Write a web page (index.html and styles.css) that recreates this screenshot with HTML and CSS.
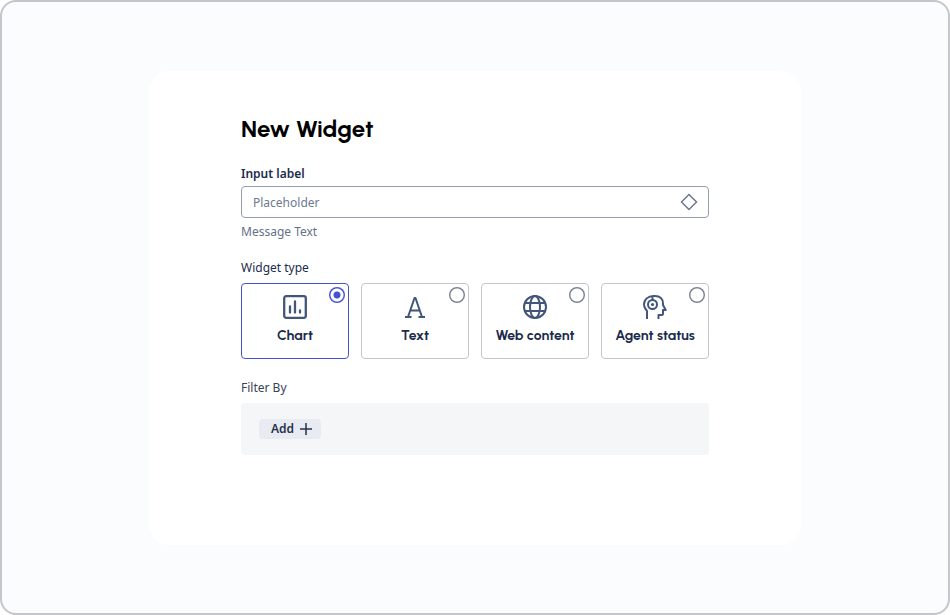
FILE: index.html
```html
<!DOCTYPE html>
<html lang="en">
<head>
<meta charset="utf-8">
<meta name="viewport" content="width=device-width, initial-scale=1">
<title>New Widget</title>
<link rel="stylesheet" href="styles.css">
</head>
<body>
<main class="frame">
  <form class="panel">
    <h1 class="title">New Widget</h1>

    <div class="field">
      <label class="label label-strong" for="widget-input">Input label</label>
      <div class="input-box">
        <input class="input" id="widget-input" type="text" placeholder="Placeholder" aria-describedby="widget-message">
        <svg class="input-icon" viewBox="0 0 18 18" aria-hidden="true"><path d="M9 1.5 16.5 9 9 16.5 1.5 9Z"/></svg>
      </div>
      <p class="message" id="widget-message">Message Text</p>
    </div>

    <fieldset class="group">
      <legend class="label">Widget type</legend>
      <div class="options">
        <label class="option">
          <input class="radio" type="radio" name="type" checked>
          <svg class="icon" viewBox="0 0 24 24" aria-hidden="true"><rect x="1.200" y="1.200" width="21.600" height="21.600" rx="2"/><path d="M7 11.500v6M12 6.500v11M17 15.500v2" stroke-linecap="round"/></svg>
          <span class="option-name">Chart</span>
        </label>
        <label class="option">
          <input class="radio" type="radio" name="type">
          <svg class="icon icon-fine" viewBox="0 0 24 24" aria-hidden="true"><path d="M5 22 11.500 3h1L19 22M7.500 15.500h9M2 22h6.500M15.500 22H22"/></svg>
          <span class="option-name">Text</span>
        </label>
        <label class="option">
          <input class="radio" type="radio" name="type">
          <svg class="icon icon-fine" viewBox="0 0 24 24" aria-hidden="true"><circle cx="12" cy="12" r="11"/><ellipse cx="12" cy="12" rx="5" ry="11"/><path d="M2 8h20M2 16h20"/></svg>
          <span class="option-name">Web content</span>
        </label>
        <label class="option">
          <input class="radio" type="radio" name="type">
          <svg class="icon icon-fine" viewBox="0 0 24 24" aria-hidden="true"><path d="M4 24v-8C2 14 1 12 1 9.500 1 4.500 5 1 10.500 1H12c5 0 8 3 8 7.500v1.500l2.700 5H20v3.500q0 1.500-1.500 1.500H15.500v4M9.500 1v4"/><circle cx="9.500" cy="9.500" r="4.500"/><circle class="dot" cx="9.500" cy="9.500" r="1.600"/></svg>
          <span class="option-name">Agent status</span>
        </label>
      </div>
    </fieldset>

    <section class="group">
      <h2 class="label label-filter">Filter By</h2>
      <div class="filters">
        <button class="add" type="button">Add
          <svg class="plus" viewBox="0 0 12 12" aria-hidden="true"><path d="M6 0v12M0 6h12"/></svg>
        </button>
      </div>
    </section>
  </form>
</main>
</body>
</html>
```

FILE: styles.css
```css
* {
  box-sizing: border-box;
}

body {
  margin: 0;
  background: #fff;
  color: #1c2b4b;
  font: 12px/20px "Noto Sans", sans-serif;
}

.frame {
  display: flex;
  align-items: center;
  justify-content: center;
  min-height: 100vh;
  border: 2px solid #c5c5cc;
  border-radius: 16px;
  background: #fbfcfe;
}

.panel {
  width: 100%;
  max-width: 652px;
  padding: 42px 92px 90px;
  border-radius: 20px;
  background: #fff;
}

.title {
  margin: 0 0 19px;
  color: #000;
  font: 700 24px/32px Urbanist, Lato, sans-serif;
}

.label {
  display: block;
  margin: 0;
  padding: 0;
  font-size: 12px;
  font-weight: 400;
  line-height: 20px;
}

.label-strong {
  font-weight: 600;
}

.label-filter {
  color: #384258;
}

.input-box {
  display: flex;
  align-items: center;
  height: 32px;
  margin-top: 2px;
  padding: 0 10px 0 11px;
  border: 1px solid #979eac;
  border-radius: 4px;
}

.input {
  flex: 1;
  min-width: 0;
  padding: 2px 0 0;
  border: 0;
  outline: 0;
  background: none;
  color: inherit;
  font: inherit;
}

.input::placeholder {
  color: #6b7890;
  opacity: 1;
}

.input-icon {
  width: 18px;
  height: 18px;
  fill: none;
  stroke: #6b7890;
  stroke-width: 1.5;
}

.message {
  margin: 4px 0 0;
  color: #64718a;
}

.group {
  min-width: 0;
  margin: 16px 0 0;
  padding: 0;
  border: 0;
}

.options {
  display: grid;
  grid-template-columns: repeat(4, 1fr);
  gap: 12px;
  margin-top: 5px;
}

.option {
  position: relative;
  display: flex;
  flex-direction: column;
  align-items: center;
  gap: 7px;
  height: 76px;
  padding-top: 11px;
  border: 1px solid #c5c5cf;
  border-radius: 4px;
}

.option:has(:checked) {
  border-color: #4353cf;
}

.option-name {
  font: 700 14px/20px Urbanist, Lato, sans-serif;
}

.radio {
  position: absolute;
  top: 3px;
  right: 3px;
  width: 16px;
  height: 16px;
  margin: 0;
  appearance: none;
  border-radius: 50%;
  background: radial-gradient(circle, transparent 6px, #7b8295 7px);
}

.radio:checked {
  background: radial-gradient(circle, #4353cf 3px, transparent 4px, transparent 6px, #4353cf 7px);
}

.icon {
  width: 24px;
  height: 24px;
  fill: none;
  stroke: #435679;
  stroke-width: 2.3;
  stroke-linejoin: round;
}

.icon-fine {
  stroke-width: 2;
}

.dot {
  fill: #435679;
  stroke: none;
}

.group + .group {
  margin-top: 19px;
}

.filters {
  display: flex;
  margin-top: 5px;
  padding: 16px 18px;
  border-radius: 4px;
  background: #f5f6f8;
}

.add {
  display: flex;
  align-items: center;
  gap: 6px;
  height: 20px;
  padding: 0 9px 0 12px;
  border: 0;
  border-radius: 4px;
  background: #e8ebf2;
  color: #27324a;
  font: 600 12px/20px "Noto Sans", sans-serif;
}

.plus {
  width: 12px;
  height: 12px;
  fill: none;
  stroke: #27324a;
  stroke-width: 1.5;
}
```
